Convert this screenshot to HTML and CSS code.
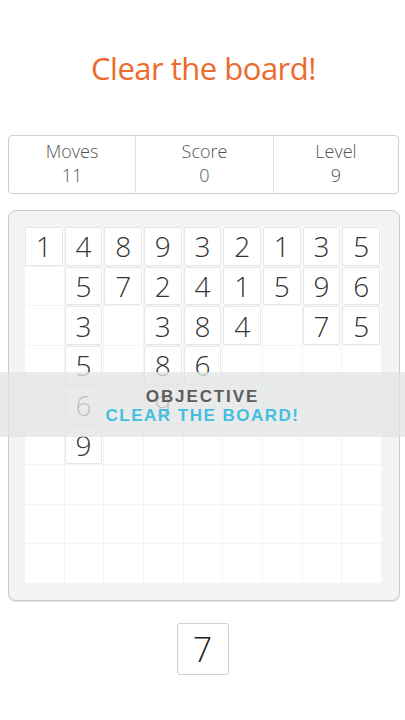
FILE: index.html
```html
<!DOCTYPE html>
<html>
<head>
<meta charset="utf-8">
<link rel="stylesheet" href="styles.css">
</head>
<body>
<div class="page">
  <h1 class="title">Clear the board!</h1>
  <div class="stats">
    <div class="stat"><div class="label">Moves</div><div class="value">11</div></div>
    <div class="stat"><div class="label">Score</div><div class="value">0</div></div>
    <div class="stat"><div class="label">Level</div><div class="value">9</div></div>
  </div>
  <div class="board-wrap">
    <div class="panel">
      <div class="grid">
        <div class="cell"><span class="tile">1</span></div>
        <div class="cell"><span class="tile">4</span></div>
        <div class="cell"><span class="tile">8</span></div>
        <div class="cell"><span class="tile">9</span></div>
        <div class="cell"><span class="tile">3</span></div>
        <div class="cell"><span class="tile">2</span></div>
        <div class="cell"><span class="tile">1</span></div>
        <div class="cell"><span class="tile">3</span></div>
        <div class="cell"><span class="tile">5</span></div>

        <div class="cell"></div>
        <div class="cell"><span class="tile">5</span></div>
        <div class="cell"><span class="tile">7</span></div>
        <div class="cell"><span class="tile">2</span></div>
        <div class="cell"><span class="tile">4</span></div>
        <div class="cell"><span class="tile">1</span></div>
        <div class="cell"><span class="tile">5</span></div>
        <div class="cell"><span class="tile">9</span></div>
        <div class="cell"><span class="tile">6</span></div>

        <div class="cell"></div>
        <div class="cell"><span class="tile">3</span></div>
        <div class="cell"></div>
        <div class="cell"><span class="tile">3</span></div>
        <div class="cell"><span class="tile">8</span></div>
        <div class="cell"><span class="tile">4</span></div>
        <div class="cell"></div>
        <div class="cell"><span class="tile">7</span></div>
        <div class="cell"><span class="tile">5</span></div>

        <div class="cell"></div>
        <div class="cell"><span class="tile">5</span></div>
        <div class="cell"></div>
        <div class="cell"><span class="tile">8</span></div>
        <div class="cell"><span class="tile">6</span></div>
        <div class="cell"></div>
        <div class="cell"></div>
        <div class="cell"></div>
        <div class="cell"></div>

        <div class="cell"></div>
        <div class="cell"><span class="tile">6</span></div>
        <div class="cell"></div>
        <div class="cell"><span class="tile">9</span></div>
        <div class="cell"></div>
        <div class="cell"></div>
        <div class="cell"></div>
        <div class="cell"></div>
        <div class="cell"></div>

        <div class="cell"></div>
        <div class="cell"><span class="tile">9</span></div>
        <div class="cell"></div>
        <div class="cell"></div>
        <div class="cell"></div>
        <div class="cell"></div>
        <div class="cell"></div>
        <div class="cell"></div>
        <div class="cell"></div>

        <div class="cell"></div><div class="cell"></div><div class="cell"></div>
        <div class="cell"></div><div class="cell"></div><div class="cell"></div>
        <div class="cell"></div><div class="cell"></div><div class="cell"></div>

        <div class="cell"></div><div class="cell"></div><div class="cell"></div>
        <div class="cell"></div><div class="cell"></div><div class="cell"></div>
        <div class="cell"></div><div class="cell"></div><div class="cell"></div>

        <div class="cell"></div><div class="cell"></div><div class="cell"></div>
        <div class="cell"></div><div class="cell"></div><div class="cell"></div>
        <div class="cell"></div><div class="cell"></div><div class="cell"></div>
      </div>
    </div>
    <div class="objective">
      <div class="obj-title">OBJECTIVE</div>
      <div class="obj-text">CLEAR THE BOARD!</div>
    </div>
  </div>
  <div class="next-wrap">
    <div class="next">7</div>
  </div>
</div>
</body>
</html>
```

FILE: styles.css
```css
* { box-sizing: border-box; }
html, body { margin: 0; padding: 0; background: #fff; }
body { width: 405px; height: 720px; overflow: hidden; }

.page {
  display: flex;
  flex-direction: column;
  padding: 0 6px 0 8px;
}

.title {
  margin: 0;
  padding-top: 48px;
  height: 135px;
  text-align: center;
  font-family: "Open Sans", sans-serif;
  font-weight: 400;
  font-size: 31px;
  line-height: 40px;
  color: #ec6b2d;
  letter-spacing: -0.5px;
}

.stats {
  display: grid;
  grid-template-columns: 126px 138px 1fr;
  height: 59px;
  border: 1px solid #cfcfcf;
  border-radius: 4px;
  font-family: "Open Sans", sans-serif;
  font-weight: 300;
  color: #555;
}
.stat {
  display: flex;
  flex-direction: column;
  align-items: center;
  padding-top: 3px;
}
.stat + .stat { border-left: 1px solid #e2e2e2; }
.label { font-size: 18px; line-height: 24px; }
.value { font-size: 18px; line-height: 24px; }

.board-wrap {
  position: relative;
  margin-top: 16px;
}
.panel {
  width: 392px;
  height: 391px;
  border: 1px solid #c9c9c9;
  border-radius: 8px;
  background: #f3f4f4;
  box-shadow: 0 1px 1px rgba(0,0,0,0.12);
  padding: 16px;
}
.grid {
  display: grid;
  grid-template-columns: repeat(9, minmax(0, 1fr));
  grid-template-rows: repeat(9, minmax(0, 1fr));
  width: 357px;
  height: 357px;
  background: #fff;
}
.cell {
  min-height: 0;
  border-right: 1px solid #f4f4f4;
  border-bottom: 1px solid #f4f4f4;
  display: flex;
  padding: 0 1px 0 0;
}
.tile {
  flex: 1;
  display: flex;
  align-items: center;
  justify-content: center;
  background: #fff;
  border: 1px solid #e6e6e6;
  border-radius: 2px;
  font-family: "Open Sans", sans-serif;
  font-weight: 300;
  font-size: 28px;
  line-height: 1;
  color: #333;
}

.objective {
  position: absolute;
  left: -8px;
  right: -6px;
  top: 162px;
  height: 65px;
  background: rgba(228, 229, 229, 0.8);
  display: flex;
  flex-direction: column;
  align-items: center;
  justify-content: center;
  font-family: "Liberation Sans", Arial, sans-serif;
  font-weight: 700;
  font-size: 17px;
  line-height: 19px;
  padding-top: 2px;
}
.obj-title { color: #5c5c5c; letter-spacing: 1.9px; }
.obj-text { color: #45bfe0; letter-spacing: 1.5px; }

.next-wrap {
  display: flex;
  justify-content: center;
  padding-top: 22px;
  padding-right: 2px;
}
.next {
  width: 52px;
  height: 52px;
  border: 1px solid #cfcfcf;
  border-radius: 3px;
  display: flex;
  align-items: center;
  justify-content: center;
  font-family: "Open Sans", sans-serif;
  font-weight: 300;
  font-size: 34px;
  color: #222;
}
```
